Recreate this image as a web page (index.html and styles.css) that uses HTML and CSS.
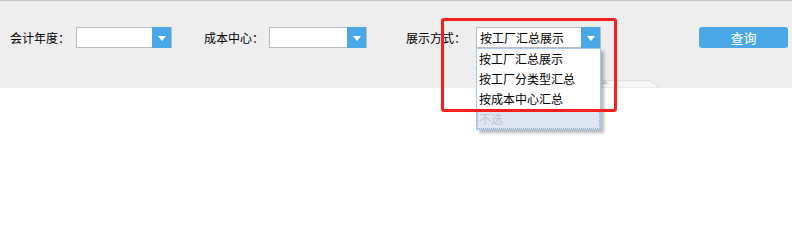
FILE: index.html
```html
<!DOCTYPE html>
<html lang="zh-CN">
<head>
<meta charset="utf-8">
<title>查询</title>
<link rel="stylesheet" href="styles.css">
</head>
<body>
<div class="page">
<div class="toolbar">
  <div class="controls">
    <div class="field f1">
      <span class="label l1">会计年度：</span>
      <div class="combo c1"><div class="combo-text"></div><div class="combo-btn"><span class="tri"></span></div></div>
    </div>
    <div class="field f2">
      <span class="label l2">成本中心：</span>
      <div class="combo c2"><div class="combo-text"></div><div class="combo-btn"><span class="tri"></span></div></div>
    </div>
    <div class="field f3">
      <span class="label l3">展示方式：</span>
      <div class="combo c3">
        <div class="combo-text">按工厂汇总展示</div><div class="combo-btn"><span class="tri"></span></div>
        <ul class="list">
          <li class="item">按工厂汇总展示</li>
          <li class="item">按工厂分类型汇总</li>
          <li class="item">按成本中心汇总</li>
          <li class="item none">不选</li>
        </ul>
      </div>
      <div class="highlight"></div>
    </div>
    <button class="query">查询</button>
  </div>
  <div class="strip">
    <svg class="tab" width="70" height="9" viewBox="0 0 70 9">
      <path d="M0 9 L2 1.5 L54 1.5 L64 9 Z" fill="#f7f7f7" stroke="#dcdcdc" stroke-width="1"/>
      <path d="M5 5 L9 1.5 L13 5 Z" fill="#cfcfcf"/>
    </svg>
  </div>
</div>
<div class="content"></div>
</div>
</body>
</html>
```
FILE: styles.css
```css
* { box-sizing: border-box; }
html, body { height: 100%; }
body {
  margin: 0;
  background: #ffffff;
  font-family: "Noto Sans CJK SC", "Microsoft YaHei", sans-serif;
  font-size: 12px;
  color: #000;
}
.page {
  min-height: 206px;
  display: flex;
  flex-direction: column;
}
.toolbar {
  height: 88px;
  flex: none;
  background: #eeeeee;
  border-top: 1px solid #c4c4c4;
  display: flex;
  flex-direction: column;
  position: relative;
  z-index: 2;
}
.content {
  flex: 1;
  min-height: 118px;
  background: #ffffff;
}
.controls {
  display: flex;
  align-items: center;
  padding-top: 26px;
  padding-left: 10px;
  height: 47px;
}
.field {
  display: flex;
  align-items: center;
  position: relative;
}
.f2 { margin-left: 32px; }
.f3 { margin-left: 39px; }
.label { line-height: 21px; white-space: nowrap; }
.l1 { width: 66px; }
.l2 { width: 65px; }
.l3 { width: 70px; }
.combo {
  position: relative;
  display: flex;
  height: 21px;
  background: #fff;
  border: 1px solid #b9bcc7;
}
.c1 { width: 96px; }
.c2 { width: 98px; }
.c3 { width: 125px; }
.combo-text {
  flex: 1;
  padding-left: 3px;
  line-height: 19px;
  font-size: 12px;
  white-space: nowrap;
  overflow: hidden;
}
.combo-btn {
  width: 19px;
  margin: -1px 0 -1px 0;
  background: #4aa8e9;
  display: flex;
  align-items: center;
  justify-content: center;
}
.tri {
  width: 0;
  height: 0;
  border-left: 4px solid transparent;
  border-right: 4px solid transparent;
  border-top: 5px solid #ffffff;
  margin-top: 1px;
}
.list {
  position: absolute;
  left: -1px;
  top: 20px;
  width: 125px;
  margin: 0;
  padding: 0;
  list-style: none;
  background: #ffffff;
  border: 1px solid #a9c8ef;
  box-shadow: 3px 3px 3px rgba(0, 0, 0, 0.28);
  z-index: 5;
}
.item {
  height: 20px;
  line-height: 20px;
  padding-left: 2px;
  white-space: nowrap;
}
.item.none {
  color: #c3c6cc;
  background: #dfe7f5;
  border: 1px dotted #8fb0e0;
  line-height: 18px;
  padding-left: 1px;
}
.highlight {
  position: absolute;
  left: 35px;
  top: -9px;
  width: 176px;
  height: 94px;
  border: 3px solid #fb2020;
  border-radius: 3px;
  z-index: 6;
  pointer-events: none;
}
.query {
  margin-left: 98px;
  width: 89px;
  height: 21px;
  border: none;
  border-radius: 3px;
  background: #4aa8e9;
  color: #ffffff;
  font-family: "Noto Sans CJK SC", "Microsoft YaHei", sans-serif;
  font-size: 13px;
  line-height: 21px;
  padding: 0;
}
.strip {
  margin-top: auto;
  height: 9px;
  padding-left: 596px;
  display: flex;
}
.tab { display: block; }
```
